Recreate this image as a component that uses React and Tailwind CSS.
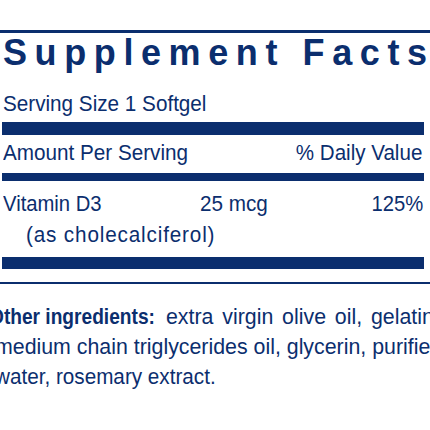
export default function App() {
  const sans = { fontFamily: '"Liberation Sans", Arial, sans-serif' };
  return (
    <div className="w-[430px] h-[430px] overflow-hidden bg-white text-[#0b2e6e]" style={sans}>
      <div className="pt-[30px]">
        <div className="h-[3px] w-full bg-[#0b2e6e]" />
        <div className="mt-[2px] ml-[3px] whitespace-nowrap text-[36px] leading-[36px] font-bold tracking-[7.6px]">
          Supplement Fact<span className="tracking-normal">s</span>
        </div>
        <div className="text-[22px] leading-[23px] whitespace-nowrap">
          <div className="mt-[21px] ml-[2px] w-[422px] pl-[1px]">
            <span className="inline-block origin-left scale-x-[0.94]">Serving Size 1 Softgel</span>
          </div>
          <div className="mt-[7px] ml-[2px] w-[422px] h-[13px] bg-[#0b2e6e]" />
          <div className="mt-[6px] ml-[2px] w-[422px] pl-[1px] pr-[2px] flex justify-between">
            <span className="inline-block origin-left scale-x-[0.94]">Amount Per Serving</span>
            <span className="inline-block origin-right scale-x-[0.935]">% Daily Value</span>
          </div>
          <div className="mt-[9px] ml-[2px] w-[422px] h-[8px] bg-[#0b2e6e]" />
          <div className="mt-[11px] ml-[2px] w-[422px] pl-[1px] pr-[1px] flex">
            <span className="block w-[197px]">
              <span className="inline-block origin-left scale-x-[0.92]">Vitamin D3</span>
            </span>
            <span className="inline-block origin-left scale-x-[0.94]">25 mcg</span>
            <span className="ml-auto inline-block origin-right scale-x-[0.92]">125%</span>
          </div>
          <div className="mt-[8px] ml-[26px]">
            <span className="inline-block origin-left scale-x-[0.94] tracking-[0.9px]">(as cholecalciferol)</span>
          </div>
          <div className="mt-[11px] ml-[2px] w-[422px] h-[12px] bg-[#0b2e6e]" />
          <div className="mt-[13px] h-[2px] w-full bg-[#0b2e6e]" />
          <div className="mt-[18px] leading-[30px]">
            <div className="flex ml-[-11.5px]">
              <span className="block w-[177px] shrink-0">
                <span className="inline-block origin-left scale-x-[0.87] font-bold">Other ingredients:</span>
              </span>
              <span className="inline-block origin-left scale-x-[0.97] [word-spacing:3px]">extra virgin olive oil, gelatin,</span>
            </div>
            <div className="ml-[-5px]">
              <span className="inline-block origin-left scale-x-[0.97]">medium chain triglycerides oil, glycerin, purified</span>
            </div>
            <div className="ml-[-5px]">
              <span className="inline-block origin-left scale-x-[0.94]">water, rosemary extract.</span>
            </div>
          </div>
        </div>
      </div>
    </div>
  );
}
